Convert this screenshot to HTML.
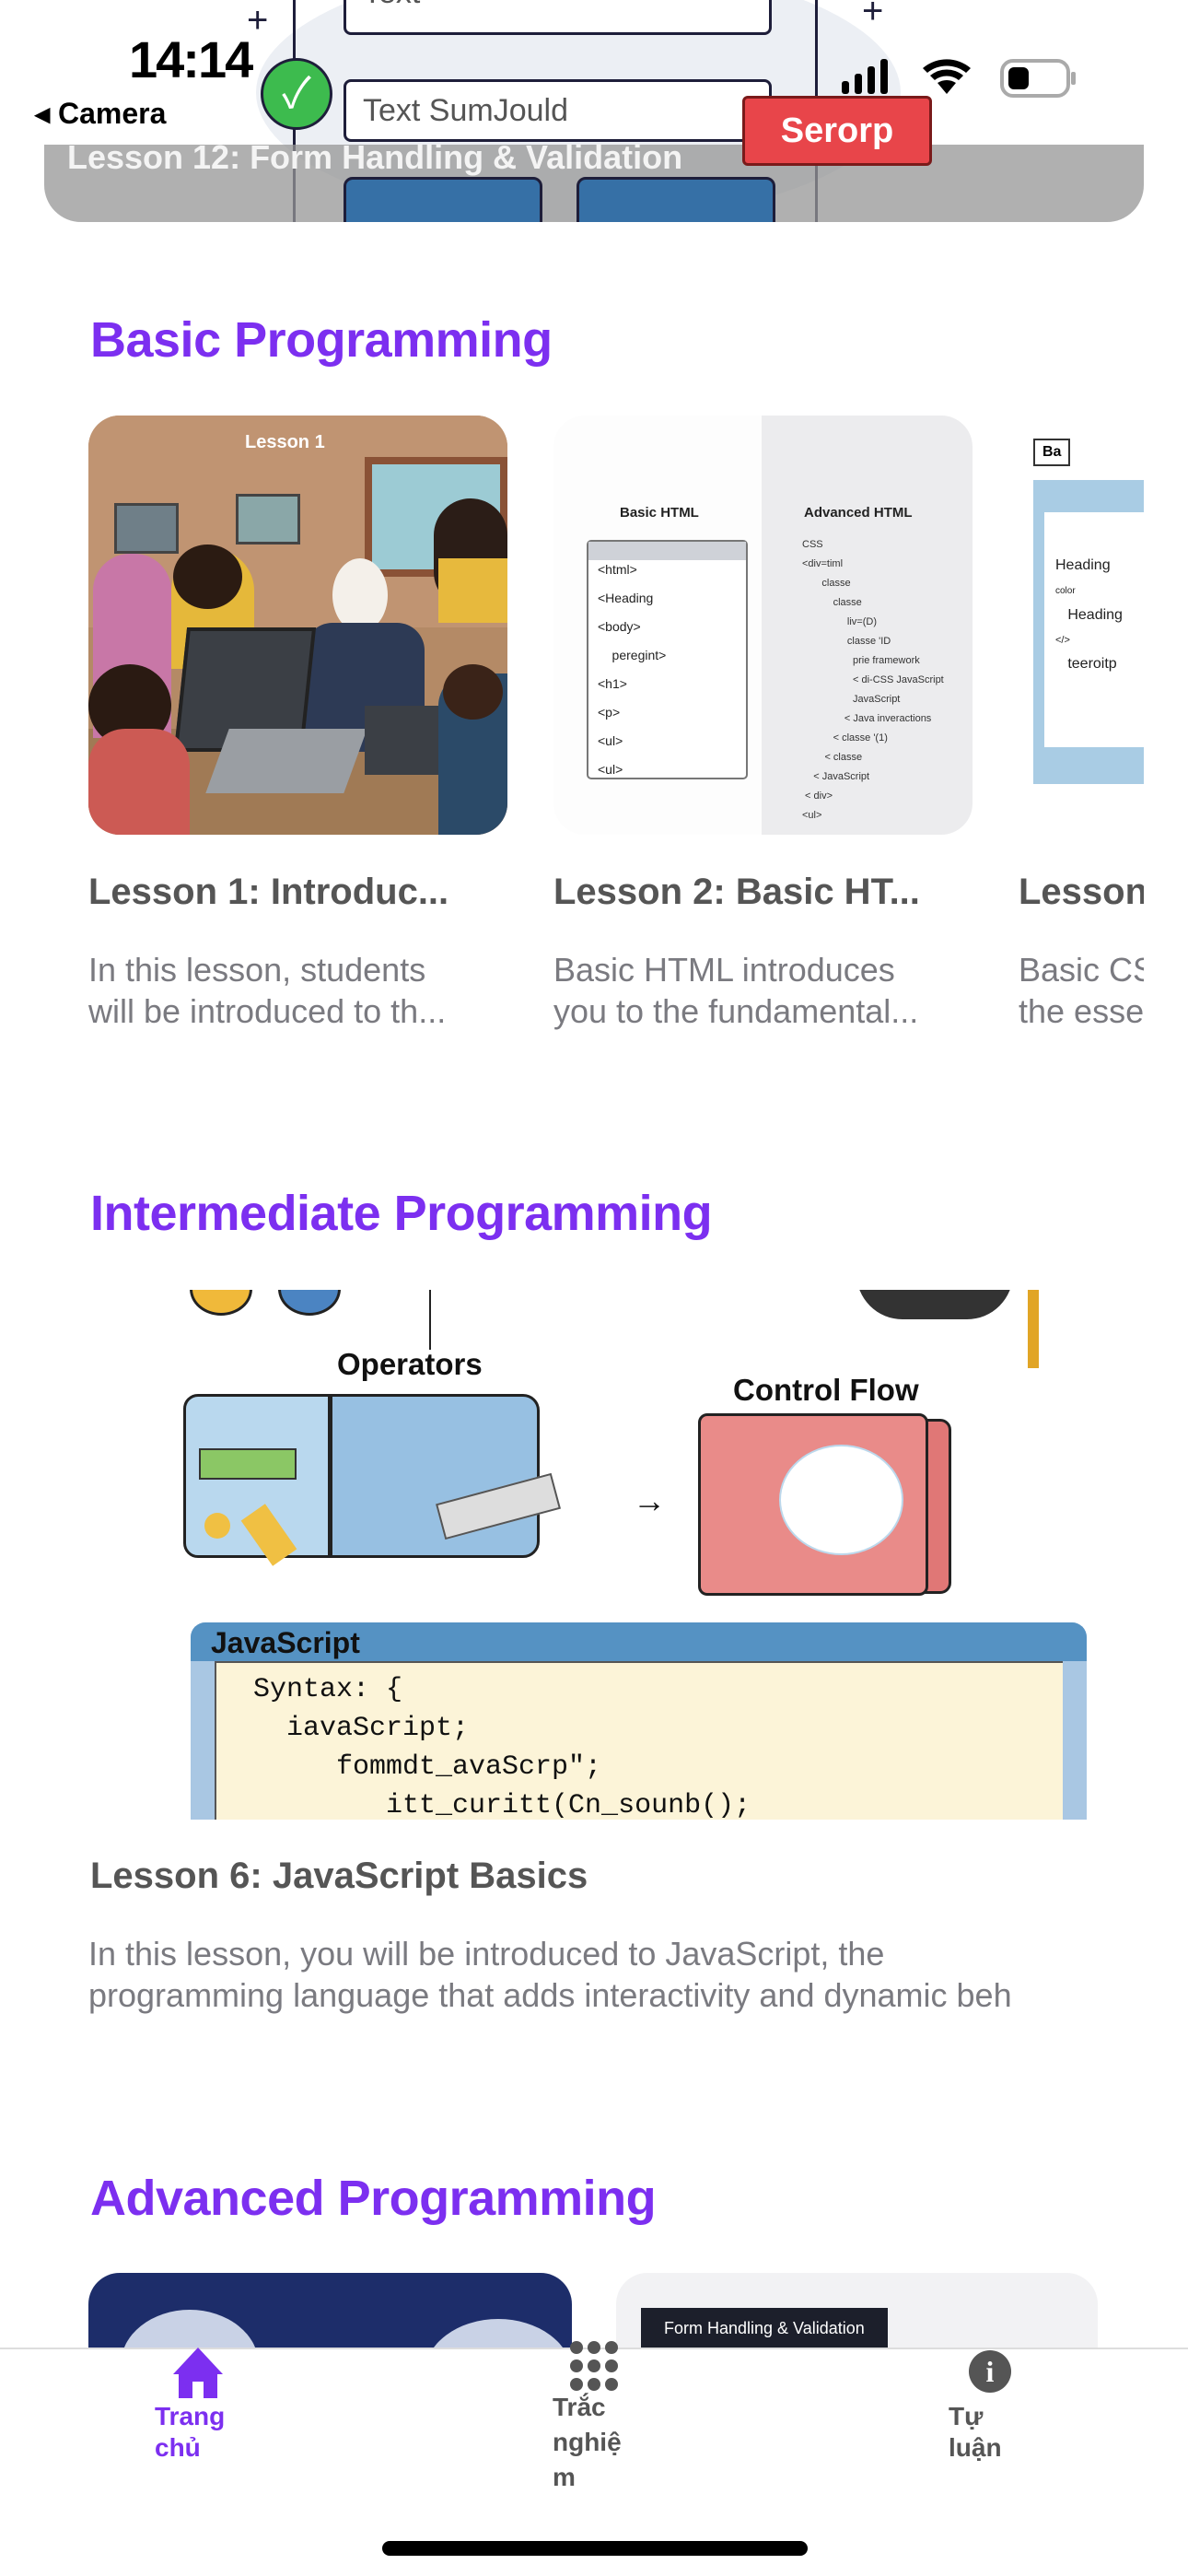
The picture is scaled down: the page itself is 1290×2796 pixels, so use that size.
<!DOCTYPE html>
<html><head><meta charset="utf-8"><style>
*{margin:0;padding:0;box-sizing:border-box}
body{width:1290px;height:2796px;position:relative;overflow:hidden;background:#fff;font-family:"Liberation Sans","Noto Sans CJK SC",sans-serif}
.a{position:absolute}
.h{position:absolute;left:98px;font-size:54px;font-weight:bold;color:#7c2ff0;white-space:nowrap;letter-spacing:-0.5px}
.t{position:absolute;font-size:40px;font-weight:bold;color:#555;white-space:nowrap;overflow:hidden}
.d{position:absolute;font-size:36px;color:#7a7a80;line-height:45px;overflow:hidden}
.mono{font-family:"Liberation Mono",monospace}
</style></head><body>

<!-- top banner -->
<div class="a" style="left:48px;top:-40px;width:1194px;height:281px;border-radius:0 0 40px 40px;overflow:hidden;background:#fff">
  <div class="a" style="left:230px;top:0;width:700px;height:281px;background:#eceff4;border-radius:50%"></div>
  <div class="a" style="left:270px;top:0;width:570px;height:281px;border-left:3px solid #1e1e3a;border-right:3px solid #1e1e3a"></div>
  <div class="a" style="left:325px;top:0;width:465px;height:78px;background:#fff;border:3px solid #1e1e3a;border-radius:8px;font-size:34px;color:#555;padding:0 18px;line-height:58px">Text</div>
  <div class="a" style="left:325px;top:126px;width:465px;height:68px;background:#fff;border:3px solid #1e1e3a;border-radius:8px;font-size:34px;color:#555;padding:0 18px;line-height:62px">Text SumJould</div>
  <div class="a" style="left:220px;top:40px;font-size:40px;color:#1e1e3a">+</div>
  <div class="a" style="left:888px;top:30px;font-size:40px;color:#1e1e3a">+</div>
  <div class="a" style="left:0;top:197px;width:1194px;height:84px;background:rgba(150,150,150,.75)"></div>
  <div class="a" style="left:325px;top:232px;width:216px;height:80px;background:#3670a6;border:3px solid #1e1e3a;border-radius:10px"></div>
  <div class="a" style="left:578px;top:232px;width:216px;height:80px;background:#3670a6;border:3px solid #1e1e3a;border-radius:10px"></div>
  <div class="a" style="left:235px;top:103px;width:78px;height:78px;border-radius:50%;background:#3dbb4e;border:3px solid #1e1e3a;color:#fff;font-size:46px;text-align:center;line-height:70px">✓</div>
  <div class="a" style="left:758px;top:144px;width:206px;height:76px;background:#e8454a;border:3px solid #7a1a1a;border-radius:6px;color:#fff;font-size:38px;font-weight:bold;text-align:center;line-height:70px">Serorp</div>
  <div class="a" style="left:25px;top:190px;font-size:36px;font-weight:bold;color:#f4f4f4;white-space:nowrap">Lesson 12: Form Handling &amp; Validation</div>
</div>
<!-- status bar -->
<div class="a" style="left:140px;top:32px;font-size:56px;font-weight:bold;color:#000;letter-spacing:-2px">14:14</div>
<div class="a" style="left:38px;top:104px;font-size:32px;font-weight:bold;color:#000">◂ Camera</div>
<svg class="a" style="left:910px;top:62px" width="270" height="50">
  <rect x="4" y="26" width="8" height="14" rx="3"/><rect x="18" y="18" width="8" height="22" rx="3"/><rect x="32" y="10" width="8" height="30" rx="3"/><rect x="46" y="2" width="8" height="38" rx="3"/>
  <path d="M118 40 L108 28 A18 18 0 0 1 128 28 Z M100 20 A28 28 0 0 1 136 20 L131 25 A21 21 0 0 0 105 25Z M92 12 A40 40 0 0 1 144 12 L139 17 A33 33 0 0 0 97 17Z"/>
  <rect x="178" y="4" width="72" height="38" rx="12" fill="none" stroke="#aaa" stroke-width="4"/><rect x="185" y="11" width="22" height="24" rx="6"/><rect x="253" y="16" width="5" height="14" rx="2" fill="#aaa"/>
</svg>

<!-- Basic -->
<div class="h" style="top:338px">Basic Programming</div>
<div class="a" style="left:96px;top:451px;width:455px;height:455px;border-radius:34px;overflow:hidden;background:#b48a66">
  <div class="a" style="left:0;top:0;width:455px;height:230px;background:#c09472"></div>
  <div class="a" style="left:300px;top:45px;width:155px;height:130px;background:#9ccbd4;border:8px solid #8a5236"></div>
  <div class="a" style="left:170px;top:18px;font-size:20px;font-weight:bold;color:#fff">Lesson 1</div>
  <div class="a" style="left:28px;top:95px;width:70px;height:55px;background:#6f7f88;border:3px solid #444"></div>
  <div class="a" style="left:160px;top:85px;width:70px;height:55px;background:#8aa7a8;border:3px solid #444"></div>
  <div class="a" style="left:0;top:340px;width:455px;height:115px;background:#a07a55"></div>
  <div class="a" style="left:5px;top:150px;width:85px;height:200px;border-radius:40px 40px 0 0;background:#c877a7"></div>
  <div class="a" style="left:90px;top:145px;width:90px;height:130px;border-radius:45px 45px 0 0;background:#e5b83a"></div>
  <div class="a" style="left:92px;top:140px;width:75px;height:70px;border-radius:50%;background:#2b1b12"></div>
  <div class="a" style="left:265px;top:155px;width:60px;height:80px;border-radius:50%;background:#f4f0ea"></div>
  <div class="a" style="left:235px;top:225px;width:130px;height:140px;border-radius:30px 30px 0 0;background:#2d3a55"></div>
  <div class="a" style="left:375px;top:90px;width:80px;height:120px;border-radius:40px;background:#2b1d17"></div>
  <div class="a" style="left:380px;top:155px;width:75px;height:70px;background:#e7b93d"></div>
  <div class="a" style="left:100px;top:230px;width:140px;height:135px;background:#3b3f45;border:4px solid #222;transform:skewX(-6deg)"></div>
  <div class="a" style="left:140px;top:340px;width:150px;height:70px;background:#9a9ea3;transform:skewX(-20deg)"></div>
  <div class="a" style="left:0;top:270px;width:90px;height:90px;border-radius:50%;background:#2a1a12"></div>
  <div class="a" style="left:0;top:340px;width:110px;height:115px;border-radius:40px 40px 0 0;background:#cc5a54"></div>
  <div class="a" style="left:300px;top:315px;width:90px;height:75px;background:#3b3f45"></div>
  <div class="a" style="left:380px;top:280px;width:75px;height:175px;border-radius:35px 0 0 0;background:#2b4a68"></div>
  <div class="a" style="left:385px;top:270px;width:65px;height:60px;border-radius:50%;background:#3a2318"></div>
</div>
<div class="a" style="left:601px;top:451px;width:455px;height:455px;border-radius:34px;overflow:hidden;background:#fdfdfd">
  <div class="a" style="left:226px;top:0;width:229px;height:455px;background:#ececee"></div>
  <div class="a" style="left:72px;top:97px;font-size:15px;font-weight:bold;color:#222">Basic HTML</div>
  <div class="a" style="left:272px;top:97px;font-size:15px;font-weight:bold;color:#222">Advanced HTML</div>
  <div class="a" style="left:36px;top:135px;width:175px;height:260px;border:2px solid #777;border-radius:5px;background:#fff;font-size:14px;color:#222;line-height:31px;padding:15px 10px">
    <div class="a" style="left:0;top:0;width:171px;height:20px;background:#cfd2d8"></div>
    &lt;html&gt;<br>&lt;Heading<br>&lt;body&gt;<br>&nbsp;&nbsp;&nbsp;&nbsp;peregint&gt;<br>&lt;h1&gt;<br>&lt;p&gt;<br>&lt;ul&gt;<br>&lt;ul&gt;</div>
  <div class="a" style="left:270px;top:130px;font-size:11px;color:#333;line-height:21px">CSS<br>&lt;div=timl<br>&nbsp;&nbsp;&nbsp;&nbsp;&nbsp;&nbsp;&nbsp;classe<br>&nbsp;&nbsp;&nbsp;&nbsp;&nbsp;&nbsp;&nbsp;&nbsp;&nbsp;&nbsp;&nbsp;classe<br>&nbsp;&nbsp;&nbsp;&nbsp;&nbsp;&nbsp;&nbsp;&nbsp;&nbsp;&nbsp;&nbsp;&nbsp;&nbsp;&nbsp;&nbsp;&nbsp;liv=(D)<br>&nbsp;&nbsp;&nbsp;&nbsp;&nbsp;&nbsp;&nbsp;&nbsp;&nbsp;&nbsp;&nbsp;&nbsp;&nbsp;&nbsp;&nbsp;&nbsp;classe 'ID<br>&nbsp;&nbsp;&nbsp;&nbsp;&nbsp;&nbsp;&nbsp;&nbsp;&nbsp;&nbsp;&nbsp;&nbsp;&nbsp;&nbsp;&nbsp;&nbsp;&nbsp;&nbsp;prie framework<br>&nbsp;&nbsp;&nbsp;&nbsp;&nbsp;&nbsp;&nbsp;&nbsp;&nbsp;&nbsp;&nbsp;&nbsp;&nbsp;&nbsp;&nbsp;&nbsp;&nbsp;&nbsp;&lt; di-CSS JavaScript<br>&nbsp;&nbsp;&nbsp;&nbsp;&nbsp;&nbsp;&nbsp;&nbsp;&nbsp;&nbsp;&nbsp;&nbsp;&nbsp;&nbsp;&nbsp;&nbsp;&nbsp;&nbsp;JavaScript<br>&nbsp;&nbsp;&nbsp;&nbsp;&nbsp;&nbsp;&nbsp;&nbsp;&nbsp;&nbsp;&nbsp;&nbsp;&nbsp;&nbsp;&nbsp;&lt; Java inveractions<br>&nbsp;&nbsp;&nbsp;&nbsp;&nbsp;&nbsp;&nbsp;&nbsp;&nbsp;&nbsp;&nbsp;&lt; classe '(1)<br>&nbsp;&nbsp;&nbsp;&nbsp;&nbsp;&nbsp;&nbsp;&nbsp;&lt; classe<br>&nbsp;&nbsp;&nbsp;&nbsp;&lt; JavaScript<br>&nbsp;&lt; div&gt;<br>&lt;ul&gt;</div>
</div>
<div class="a" style="left:1106px;top:451px;width:136px;height:455px;overflow:hidden;background:#fff">
  <div class="a" style="left:16px;top:25px;width:40px;height:30px;border:2px solid #333;font-size:16px;font-weight:bold;padding:4px 8px">Ba</div>
  <div class="a" style="left:16px;top:70px;width:120px;height:330px;background:#a9cce4"></div>
  <div class="a" style="left:28px;top:105px;width:108px;height:255px;background:#fff;font-size:16px;color:#222;padding:45px 0 0 12px;line-height:26px">Heading<br><span style="font-size:10px">color</span><br>&nbsp;&nbsp;&nbsp;Heading<br><span style="font-size:11px">&lt;/&gt;</span><br>&nbsp;&nbsp;&nbsp;teeroitp</div>
</div>
<div class="t" style="left:96px;top:946px;width:450px">Lesson 1: Introduc...</div>
<div class="t" style="left:601px;top:946px;width:455px">Lesson 2: Basic HT...</div>
<div class="t" style="left:1106px;top:946px;width:136px">Lesson</div>
<div class="d" style="left:96px;top:1030px;width:460px">In this lesson, students<br>will be introduced to th...</div>
<div class="d" style="left:601px;top:1030px;width:460px">Basic HTML introduces<br>you to the fundamental...</div>
<div class="d" style="left:1106px;top:1030px;width:136px;white-space:nowrap">Basic CSS<br>the essen</div>

<!-- Intermediate -->
<div class="h" style="top:1286px">Intermediate Programming</div>
<div class="a" style="left:96px;top:1400px;width:1146px;height:575px;overflow:hidden;background:#fff">
  <div class="a" style="left:110px;top:-30px;width:68px;height:58px;border-radius:50%;background:#f0b93a;border:3px solid #222"></div>
  <div class="a" style="left:206px;top:-30px;width:68px;height:58px;border-radius:50%;background:#4b84c2;border:3px solid #222"></div>
  <div class="a" style="left:370px;top:0;width:2px;height:65px;background:#222"></div>
  <div class="a" style="left:834px;top:-40px;width:170px;height:72px;border-radius:0 0 50px 50px;background:#333"></div>
  <div class="a" style="left:1020px;top:0;width:12px;height:85px;background:#e1a526"></div>
  <div class="a" style="left:270px;top:62px;font-size:33px;font-weight:bold;color:#111">Operators</div>
  <div class="a" style="left:700px;top:90px;font-size:33px;font-weight:bold;color:#111">Control Flow</div>
  <div class="a" style="left:103px;top:113px;width:160px;height:178px;background:#b9d8ee;border:3px solid #222;border-radius:16px 0 0 16px"></div>
  <div class="a" style="left:262px;top:113px;width:228px;height:178px;background:#97c0e2;border:3px solid #222;border-radius:0 18px 18px 0"></div>
  <div class="a" style="left:120px;top:172px;width:106px;height:34px;background:#8bc765;border:2px solid #333"></div>
  <div class="a" style="left:126px;top:242px;width:28px;height:28px;border-radius:50%;background:#f0c043"></div>
  <div class="a" style="left:180px;top:236px;width:32px;height:60px;background:#f0c043;transform:rotate(-35deg)"></div>
  <div class="a" style="left:380px;top:215px;width:130px;height:40px;background:#ddd;border:2px solid #555;transform:rotate(-15deg)"></div>
  <div class="a" style="left:591px;top:208px;font-size:36px;color:#111">→</div>
  <div class="a" style="left:682px;top:140px;width:255px;height:190px;background:#e07776;border:3px solid #222;border-radius:12px"></div>
  <div class="a" style="left:662px;top:134px;width:250px;height:198px;background:#e98b89;border:3px solid #222;border-radius:10px"></div>
  <div class="a" style="left:750px;top:168px;width:135px;height:120px;border-radius:50%;background:#fff;border:2px solid #bcd8ec"></div>
  <div class="a" style="left:111px;top:361px;width:973px;height:214px;background:#a9c7e3;border-radius:16px 16px 0 0"></div>
  <div class="a" style="left:111px;top:361px;width:973px;height:42px;background:#5592c3;border-radius:16px 16px 0 0;font-size:32px;font-weight:bold;color:#111;padding-left:22px;line-height:44px">JavaScript</div>
  <div class="a mono" style="left:137px;top:403px;width:921px;height:172px;background:#fcf4d8;border-left:2px solid #555;border-top:2px solid #555;font-size:30px;color:#111;padding:8px 0 0 40px;line-height:42px;white-space:pre">Syntax: {
  iavaScript;
     fommdt_avaScrp";
        itt_curitt(Cn_sounb();</div>
</div>
<div class="t" style="left:98px;top:2014px">Lesson 6: JavaScript Basics</div>
<div class="d" style="left:96px;top:2098px;width:1146px;white-space:nowrap">In this lesson, you will be introduced to JavaScript, the<br>programming language that adds interactivity and dynamic beh</div>

<!-- Advanced -->
<div class="h" style="top:2355px">Advanced Programming</div>
<div class="a" style="left:96px;top:2467px;width:525px;height:90px;border-radius:34px 34px 0 0;overflow:hidden;background:#1d2d6a">
  <div class="a" style="left:35px;top:40px;width:150px;height:120px;border-radius:50%;background:#c9d2e6"></div>
  <div class="a" style="left:365px;top:50px;width:160px;height:120px;border-radius:50%;background:#c9d2e6"></div>
</div>
<div class="a" style="left:669px;top:2467px;width:523px;height:90px;border-radius:34px 34px 0 0;background:#f2f2f4">
  <div class="a" style="left:27px;top:38px;width:268px;height:44px;background:#1c1f2b;color:#fff;font-size:18px;padding-left:25px;line-height:44px">Form Handling &amp; Validation</div>
</div>

<!-- tab bar -->
<div class="a" style="left:0;top:2548px;width:1290px;height:248px;background:#fff;border-top:2px solid #ddd"></div>
<svg class="a" style="left:184px;top:2545px" width="62" height="62"><path d="M31 3 L4 32 L10 32 L10 58 L25 58 L25 40 L37 40 L37 58 L52 58 L52 32 L58 32 Z" fill="#7c2ff0"/></svg>
<div class="a" style="left:168px;top:2606px;font-size:28px;font-weight:bold;color:#7c2ff0;line-height:34px">Trang<br>chủ</div>
<svg class="a" style="left:618px;top:2540px" width="54" height="56" fill="#555"><circle cx="8" cy="8" r="7"/><circle cx="27" cy="8" r="7"/><circle cx="46" cy="8" r="7"/><circle cx="8" cy="28" r="7"/><circle cx="27" cy="28" r="7"/><circle cx="46" cy="28" r="7"/><circle cx="8" cy="48" r="7"/><circle cx="27" cy="48" r="7"/><circle cx="46" cy="48" r="7"/></svg>
<div class="a" style="left:600px;top:2594px;font-size:28px;font-weight:bold;color:#555;line-height:38px">Trắc<br>nghiệ<br>m</div>
<div class="a" style="left:1052px;top:2551px;width:46px;height:46px;border-radius:50%;background:#555;color:#fff;font-size:32px;font-weight:bold;text-align:center;line-height:46px;font-family:'Liberation Serif',serif">i</div>
<div class="a" style="left:1030px;top:2606px;font-size:28px;font-weight:bold;color:#555;line-height:34px">Tự<br>luận</div>
<div class="a" style="left:415px;top:2758px;width:462px;height:16px;border-radius:8px;background:#000"></div>
</body></html>
